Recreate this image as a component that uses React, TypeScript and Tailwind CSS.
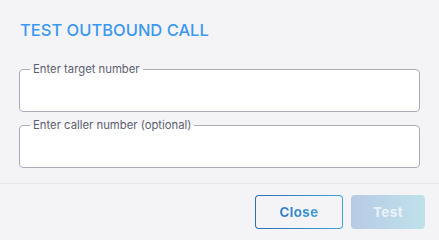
import React from "react";

export default function App() {
  return (
    <div className="h-[240px] w-[439px] bg-[#f4f4f7] font-['Inter',sans-serif]">
      <div className="px-5 pt-[16px]">
        <h1 className="text-[16.5px] leading-[28px] font-medium text-[#3b98f1]">
          TEST OUTBOUND CALL
        </h1>
      </div>

      <div className="mt-[18px] flex flex-col gap-[6px] px-[19px]">
        {/* target number */}
        <fieldset className="h-[50px] rounded-[4px] border border-[#a9abba] bg-white px-[10px]">
          <legend className="px-[3px] text-[11.3px] leading-[14px] text-[#5b606e]">
            Enter target number
          </legend>
        </fieldset>

        {/* caller number */}
        <fieldset className="h-[50px] rounded-[4px] border border-[#a9abba] bg-white px-[10px]">
          <legend className="px-[3px] text-[11.3px] leading-[14px] text-[#5b606e]">
            Enter caller number (optional)
          </legend>
        </fieldset>
      </div>

      <div className="mt-[15px] h-px w-full bg-[#e4e4e8]" />

      <div className="flex justify-end gap-2 px-[14px] pt-[11px]">
        <button className="h-[34px] w-[88px] rounded-[4px] bg-gradient-to-r from-[#2f6db8] to-[#3ca5d4] p-px">
          <span className="flex h-full w-full items-center justify-center rounded-[3px] bg-[#f4f4f7]">
            <span className="bg-gradient-to-r from-[#3478c4] to-[#3c9fd2] bg-clip-text text-[13.5px] font-bold tracking-wide text-transparent">
              Close
            </span>
          </span>
        </button>
        <button className="flex h-[34px] w-[74px] items-center justify-center rounded-[4px] bg-gradient-to-r from-[#b7cbe5] to-[#bfe1eb] text-[13.5px] font-bold tracking-wide text-[#eaf2f8]">
          Test
        </button>
      </div>
    </div>
  );
}
